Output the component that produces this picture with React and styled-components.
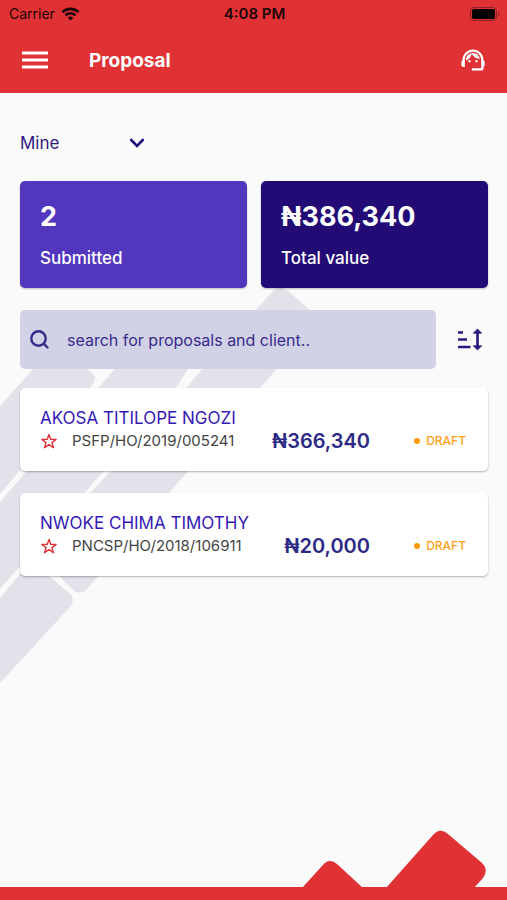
import styled, { createGlobalStyle } from 'styled-components'
import { MdSupportAgent } from 'react-icons/md'

const proposals = [
    { id: 1, name: 'AKOSA TITILOPE NGOZI', code: 'PSFP/HO/2019/005241', amount: '₦366,340', status: 'DRAFT' },
    { id: 2, name: 'NWOKE CHIMA TIMOTHY', code: 'PNCSP/HO/2018/106911', amount: '₦20,000', status: 'DRAFT' },
]

export default function App(){
    return(
        <>
            <GlobalStyle />
            <Screen>
                <Header />
                <Content>
                    <Pattern />
                    <Filter>
                        <select aria-label='Owner' defaultValue='Mine'>
                            <option>Mine</option>
                            <option>All</option>
                        </select>
                        <svg width='16' height='10' viewBox='0 0 16 10'>
                            <path d='M2.200 2l5.800 5.800 5.800-5.800' fill='none' stroke='#230d78' strokeWidth='2.600' strokeLinecap='round' strokeLinejoin='miter' />
                        </svg>
                    </Filter>

                    <Totals>
                        <Total $color='#5236be'>
                            <strong>2</strong>
                            <span>Submitted</span>
                        </Total>
                        <Total $color='#230b76'>
                            <strong>₦386,340</strong>
                            <span>Total value</span>
                        </Total>
                    </Totals>

                    <SearchRow>
                        <SearchBox>
                            <svg width='20' height='20' viewBox='0 0 20 20' fill='none' stroke='#3a2a8c' strokeWidth='2.400' strokeLinecap='round'>
                                <circle cx='8.500' cy='8.500' r='7.200' />
                                <path d='M13.900 13.900l3.600 3.600' />
                            </svg>
                            <input type='text' aria-label='Search' placeholder='search for proposals and client..' />
                        </SearchBox>
                        <IconButton aria-label='Sort'>
                            <svg width='26' height='24' viewBox='0 0 26 24' fill='none' stroke='#2c1880' strokeWidth='2.600'>
                                <path d='M1 4.500h5M1 11.500h9M1 19h12.500' />
                                <path d='M20.500 3.500v16' />
                                <path d='M20.500 1l4.200 4.200h-8.400zM20.500 22l4.200-4.200h-8.400z' fill='#2c1880' strokeWidth='0.800' strokeLinejoin='round' />
                            </svg>
                        </IconButton>
                    </SearchRow>

                    <List>
                        {proposals.map(p => <Proposal key={p.id} {...p} />)}
                    </List>
                </Content>
                <Footer />
            </Screen>
        </>
    )
}

function Header(){
    return(
        <Top>
            <StatusBar>
                <Carrier>
                    Carrier
                    <svg width='19' height='14' viewBox='0 0 18 14' fill='none' stroke='#1c0505' strokeWidth='2.600'>
                        <path d='M1 5.200a11.300 11.300 0 0 1 16 0' />
                        <path d='M4 8.400a7 7 0 0 1 10 0' />
                        <path d='M9 13.600l-2.700-2.900a3.900 3.900 0 0 1 5.400 0z' fill='#1c0505' stroke='none' />
                    </svg>
                </Carrier>
                <Clock>4:08 PM</Clock>
                <Battery>
                    <svg width='30' height='14' viewBox='0 0 30 14'>
                        <rect x='0.500' y='0.500' width='26' height='13' rx='3.500' fill='none' stroke='#8f2226' />
                        <rect x='2' y='2' width='23' height='10' rx='2' fill='#000' />
                        <path d='M28 5v4q1.500-.5 1.500-2t-1.500-2z' fill='#8f2226' />
                    </svg>
                </Battery>
            </StatusBar>
            <Nav>
                <IconButton aria-label='Menu'>
                    <svg width='28' height='18' viewBox='0 0 28 18' stroke='#fff' strokeWidth='3'>
                        <path d='M1 2h26M1 9h26M1 16h26' />
                    </svg>
                </IconButton>
                <h1>Proposal</h1>
                <IconButton aria-label='Support'>
                    <MdSupportAgent size={28} color='#fff' />
                </IconButton>
            </Nav>
        </Top>
    )
}

function Proposal({ name, code, amount, status }){
    return(
        <Card>
            <h2>{name}</h2>
            <Details>
                <StarButton aria-label='Favourite'>
                    <svg width='18' height='16' viewBox='0 0 18 16'>
                        <path d='M9 1.500l1.800 4.900h5.300l-4.200 3.200 1.600 5.100L9 11.600l-4.500 3.100 1.600-5.100-4.200-3.200h5.300z' fill='none' stroke='#e03236' strokeWidth='1.400' strokeLinejoin='round' />
                    </svg>
                </StarButton>
                <Code>{code}</Code>
                <Amount>{amount}</Amount>
                <Status>{status}</Status>
            </Details>
        </Card>
    )
}

// slanted tiles behind the cards
function Pattern(){
    return(
        <PatternSvg width='340' height='610' viewBox='0 93 340 610' fill='#e3e2eb'>
            <path d='M0 406L50 350Q56 344 63 349L91 372Q98 378 92 385L0 494z' />
            <path d='M0 502L146 333Q152 328 158 333L184 355Q191 361 187 371L178 385L102 473L0 589z' />
            <path d='M36 553L188 386L202 369L273 291Q280 285 288 291L312 312Q319 318 313 327L187 472L87 589Q80 596 73 590z' />
            <path d='M0 598L25 568Q31 562 38 567L69 593Q76 599 70 607L0 683z' />
        </PatternSvg>
    )
}

function Footer(){
    return(
        <Bottom>
            <svg width='207' height='60' viewBox='300 828 207 60' fill='#e03235'>
                <path d='M302 888L322 866Q329 857 337 864L363 888z' />
                <path d='M386 888L433 835Q440 827 448 834L482 863Q489 870 483 878L474 888z' />
            </svg>
        </Bottom>
    )
}

const GlobalStyle = createGlobalStyle`
    *{
        box-sizing: border-box;
    }

    body{
        margin: 0;
        background: #fafafa;
        font-family: Inter, 'Liberation Sans', sans-serif;
    }

    h1, h2{
        margin: 0;
    }

    svg{
        display: block;
        flex-shrink: 0;
    }
`

const Screen = styled.div`
    min-height: 100vh;
    display: flex;
    flex-direction: column;
    background: #fafafa;
`

const Top = styled.header`
    background: #e03235;
`

const StatusBar = styled.div`
    height: 27px;
    padding: 0 7px 0 9px;
    display: grid;
    grid-template-columns: 1fr auto 1fr;
    align-items: center;
    font-size: 14px;
    color: #1c0505;
`

const Carrier = styled.div`
    display: flex;
    align-items: center;
    gap: 6px;
`

const Clock = styled.div`
    font-size: 15px;
    font-weight: 600;
`

const Battery = styled.div`
    display: flex;
    justify-content: flex-end;
`

const Nav = styled.nav`
    height: 66px;
    padding: 0 20px 0 21px;
    display: flex;
    align-items: center;

    h1{
        flex: 1;
        margin-left: 40px;
        font-size: 19px;
        font-weight: 700;
        color: #fff;
    }
`

const IconButton = styled.button`
    padding: 0;
    border: none;
    background: none;
    cursor: pointer;
`

const Content = styled.main`
    position: relative;
    flex: 1;
    padding: 34px 19px 24px 20px;
`

const PatternSvg = styled.svg`
    position: absolute;
    top: 0;
    left: 0;
    z-index: 0;
`

const Filter = styled.div`
    width: 125px;
    height: 32px;
    display: flex;
    align-items: center;

    select{
        width: 100%;
        margin-right: -16px;
        padding: 0;
        border: none;
        appearance: none;
        background: none;
        font-family: inherit;
        font-size: 17px;
        color: #2e1a80;
    }

    svg{
        pointer-events: none;
    }
`

const Totals = styled.section`
    position: relative;
    margin-top: 22px;
    display: grid;
    grid-template-columns: 1fr 1fr;
    gap: 14px;
`

const Total = styled.div`
    height: 107px;
    padding: 20px;
    display: flex;
    flex-direction: column;
    gap: 12px;
    border-radius: 5px;
    background: ${props => props.$color};
    box-shadow: 0 1px 2px rgba(0, 0, 0, 0.25);
    color: #fff;

    strong{
        font-size: 27px;
        line-height: 32px;
        font-weight: 700;
    }

    span{
        font-size: 17px;
        line-height: 26px;
        font-weight: 500;
    }
`

const SearchRow = styled.div`
    position: relative;
    margin-top: 22px;
    padding-right: 5px;
    display: flex;
    align-items: center;
    gap: 21px;
`

const SearchBox = styled.div`
    flex: 1;
    height: 59px;
    padding: 0 10px;
    display: flex;
    align-items: center;
    gap: 17px;
    border-radius: 5px;
    background: #d1d2e5;

    input{
        flex: 1;
        min-width: 0;
        padding: 0;
        border: none;
        outline: none;
        background: none;
        font-family: inherit;
        font-size: 16px;
        color: #3a2a8c;
    }

    input::placeholder{
        color: #3a2a8c;
        opacity: 1;
    }
`

const List = styled.section`
    position: relative;
    margin-top: 19px;
    display: flex;
    flex-direction: column;
    gap: 22px;
`

const Card = styled.article`
    height: 83px;
    padding: 19px 22px 17px 20px;
    border-radius: 5px;
    background: #fff;
    box-shadow: 0 1px 2px rgba(0, 0, 0, 0.3);

    h2{
        font-size: 17px;
        line-height: 22px;
        font-weight: 400;
        color: #3519b5;
    }
`

const Details = styled.div`
    display: grid;
    grid-template-columns: 32px 1fr auto 96px;
    align-items: center;
    line-height: 24px;
`

const StarButton = styled(IconButton)`
    width: 18px;
`

const Code = styled.span`
    font-size: 15px;
    color: #444;
`

const Amount = styled.span`
    font-size: 20px;
    font-weight: 600;
    text-align: right;
    color: #2d2a86;
`

const Status = styled.span`
    display: flex;
    align-items: center;
    justify-content: flex-end;
    gap: 6px;
    font-size: 12px;
    font-weight: 500;
    color: #ff9f1a;

    &::before{
        content: '';
        width: 6px;
        height: 6px;
        border-radius: 50%;
        background: #ff9800;
    }
`

const Bottom = styled.footer`
    position: relative;
    height: 13px;
    background: #e03235;

    svg{
        position: absolute;
        right: 0;
        bottom: 12px;
    }
`
